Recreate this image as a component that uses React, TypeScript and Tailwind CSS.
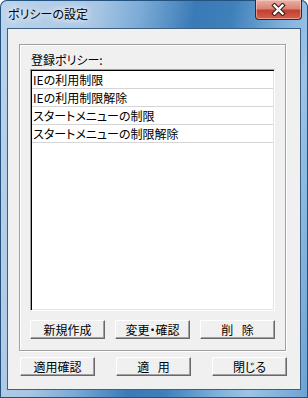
const font = "font-['Noto_Sans_CJK_JP','Noto_Sans_CJK_SC',sans-serif] [font-feature-settings:'palt']";

const policies = [
  "IEの利用制限",
  "IEの利用制限解除",
  "スタートメニューの制限",
  "スタートメニューの制限解除",
];

function WinButton({ label }: { label: string }) {
  return (
    <button
      className={`w-[75px] h-[19px] bg-[#f0f0f0] border border-t-white border-l-white border-r-[#696969] border-b-[#696969] shadow-[inset_-1px_-1px_0_#a0a0a0] text-[12px] leading-[16px] text-black [word-spacing:6px] whitespace-pre ${font}`}
    >
      {label}
    </button>
  );
}

export default function App() {
  return (
    <div
      className={`w-[308px] h-[398px] flex flex-col rounded-t-[7px] overflow-hidden shadow-[inset_0_0_0_1px_#24527f] bg-[linear-gradient(100deg,#bcd4ec_0%,#a8c6e4_26%,#7aaad6_38%,#3a7bb7_52%,#3f80bb_62%,#7fb1db_76%,#9cc4e6_84%,#6aa2d3_100%)] ${font}`}
    >
      {/* Title bar */}
      <div className="h-[28px] flex justify-between items-start pl-[8px] pr-[6px]">
        <div className="mt-[5px] text-[12px] leading-[18px] text-black [text-shadow:0_0_6px_#fff,0_0_10px_#fff]">
          ポリシーの設定
        </div>
        <div className="w-[47px] h-[20px] rounded-b-[4px] border border-t-0 border-[#4d1f1a] bg-[linear-gradient(180deg,#e9b0a5_0%,#d98576_45%,#c4402f_55%,#d2604d_100%)] flex items-center justify-center shadow-[inset_0_0_0_1px_rgba(255,220,210,0.5)]">
          <svg width="15" height="13" viewBox="0 0 15 13">
            <path d="M3.5 2.5 L11.5 10.5 M11.5 2.5 L3.5 10.5" stroke="#3b1712" strokeWidth="4.4" strokeLinecap="square" />
            <path d="M3.5 2.5 L11.5 10.5 M11.5 2.5 L3.5 10.5" stroke="#ffffff" strokeWidth="2.4" strokeLinecap="square" />
          </svg>
        </div>
      </div>

      {/* Client area */}
      <div className="mx-[7px] h-[362px] border border-[#3d5f82] bg-[#f0f0f0] flex flex-col">
        {/* Group box */}
        <div className="ml-[11px] mt-[15px] w-[267px] h-[307px] border border-[#a0a0a0] shadow-[1px_1px_0_#fff,inset_1px_1px_0_#fff] flex flex-col pt-[7px] px-[10px]">
          <div className="h-[15px] text-[12px] leading-[15px] text-black pl-[1px]">
            登録ポリシー:
          </div>
          <div className="mt-[2px] h-[242px] border border-t-[#a0a0a0] border-l-[#a0a0a0] border-r-white border-b-white bg-white p-[1px] shadow-[inset_1px_1px_0_#000,inset_-1px_-1px_0_#e3e3e3]">
            <div className="flex flex-col">
              {policies.map((p) => (
                <div
                  key={p}
                  className="h-[18px] border-b border-[#d5d5d5] pl-[1px] text-[12px] leading-[17px] text-black whitespace-nowrap"
                >
                  {p}
                </div>
              ))}
            </div>
          </div>
          <div className="mt-[9px] flex justify-between">
            <WinButton label="新規作成" />
            <WinButton label="変更・確認" />
            <WinButton label="削 除" />
          </div>
        </div>

        {/* Bottom buttons */}
        <div className="mt-[6px] ml-[12px] w-[267px] flex justify-between">
          <WinButton label="適用確認" />
          <WinButton label="適 用" />
          <WinButton label="閉じる" />
        </div>
      </div>
    </div>
  );
}
